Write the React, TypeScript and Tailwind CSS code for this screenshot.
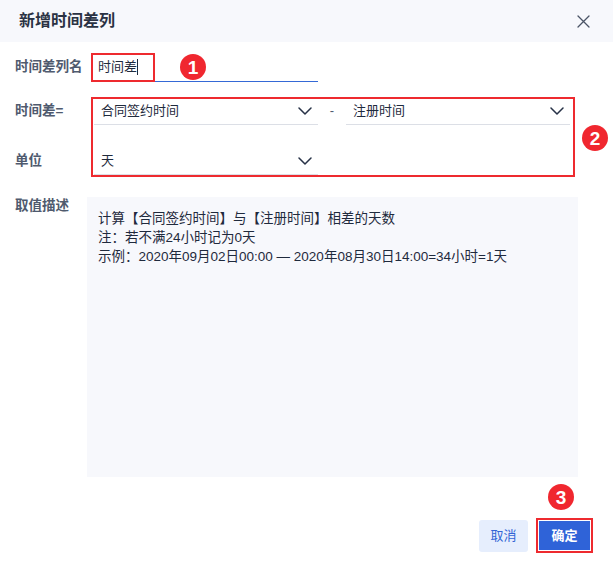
import React from 'react'

const font = { fontFamily: '"Liberation Sans", "Noto Sans CJK SC", sans-serif' }

function Chevron() {
  return (
    <svg width="14" height="8" viewBox="0 0 14 8" fill="none" stroke="#273247" strokeWidth="1.5" strokeLinecap="round" strokeLinejoin="round">
      <path d="M1 1l6 6 6-6" />
    </svg>
  )
}

function Badge({ n }: { n: number }) {
  return (
    <div className="w-[26px] h-[26px] rounded-full bg-[#f0272f] text-white flex items-center justify-center text-[19px] font-bold leading-none">
      {n}
    </div>
  )
}

function Select({ value, width }: { value: string; width: string }) {
  return (
    <div className={`${width} h-[28px] flex items-center justify-between pl-[7px] pr-[6px] border-b border-[#dcdfe6] text-[13px] text-[#1f2a3d]`}>
      <span>{value}</span>
      <Chevron />
    </div>
  )
}

export default function App() {
  return (
    <div className="w-[613px] h-[562px] bg-white relative overflow-hidden" style={font}>
      {/* Header */}
      <div className="h-[42px] bg-[#f7f8fc] flex items-center justify-between pl-[19px] pr-[23px]">
        <span className="text-[16px] font-bold text-[#2a3243]">新增时间差列</span>
        <svg width="13" height="13" viewBox="0 0 13 13" stroke="#4b5466" strokeWidth="1.3" strokeLinecap="round">
          <path d="M1 1l11 11M12 1L1 12" />
        </svg>
      </div>

      <div className="pl-[15px]">
        {/* Row 1 */}
        <div className="mt-[11px] flex items-center h-[29px]">
          <span className="w-[76px] text-[13.5px] font-bold text-[#4f5a6e]">时间差列名</span>
          <div className="relative w-[227px] h-[29px] border-b border-[#3569d6] flex items-center pl-[7px] text-[13px] text-[#1f2a3d]">
            <span>时间差</span>
            <span className="w-px h-[16px] bg-[#1f2a3d]" />
            <div className="absolute left-0 top-0 w-[64px] h-[29px] border-2 border-[#ee2a2f]" />
            <div className="absolute left-[89px] top-[1px]">
              <Badge n={1} />
            </div>
          </div>
        </div>

        {/* Rows 2-3 */}
        <div className="mt-[15px] flex">
          <div className="w-[76px] flex flex-col text-[13.5px] font-bold text-[#4f5a6e]">
            <span className="h-[28px] flex items-center">时间差=</span>
            <span className="mt-[22px] h-[28px] flex items-center">单位</span>
          </div>
          <div className="relative w-[484px] h-[80px] pl-[3px]">
            <div className="flex items-center">
              <Select value="合同签约时间" width="w-[224px]" />
              <span className="w-[28px] text-center text-[13px] text-[#4f5a6e]">-</span>
              <Select value="注册时间" width="w-[224px]" />
            </div>
            <div className="mt-[22px]">
              <Select value="天" width="w-[224px]" />
            </div>
            <div className="absolute inset-0 border-2 border-[#ee2a2f]" />
            <div className="absolute left-[491px] top-[28px]">
              <Badge n={2} />
            </div>
          </div>
        </div>

        {/* Description */}
        <div className="mt-[20px] flex">
          <span className="w-[72px] text-[13.5px] font-bold text-[#4f5a6e] leading-[18px]">取值描述</span>
          <div className="w-[491px] h-[280px] bg-[#f7f8fc] pl-[11px] pt-[12px] text-[13.5px] leading-[19px] text-[#1f2a3d]">
            <div>计算【合同签约时间】与【注册时间】相差的天数</div>
            <div>注：若不满24小时记为0天</div>
            <div>示例：2020年09月02日00:00 — 2020年08月30日14:00=34小时=1天</div>
          </div>
        </div>
      </div>

      {/* Footer */}
      <div className="mt-[41px] flex justify-end items-center gap-[8px] pr-[20px]">
        <button className="w-[49px] h-[32px] rounded-[3px] bg-[#e6eefd] text-[#3366d6] text-[13px]">取消</button>
        <div className="relative">
          <div className="border-2 border-[#ee2a2f] p-px">
            <button className="w-[51px] h-[29px] bg-[#2f63d8] text-white text-[13px] font-bold">确定</button>
          </div>
          <div className="absolute left-[12px] top-[-34px]">
            <Badge n={3} />
          </div>
        </div>
      </div>
    </div>
  )
}
